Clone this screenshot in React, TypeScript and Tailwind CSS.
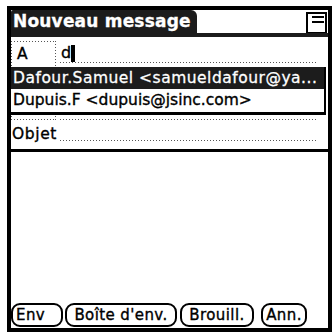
const dotsH = "h-[1px] bg-[repeating-linear-gradient(90deg,#555_0_1px,transparent_1px_3px)]";
const dotsV = "w-[1px] bg-[repeating-linear-gradient(180deg,#555_0_1px,transparent_1px_3px)]";

function LabelBox({ children, top = true, bottom = false, h }: { children?: React.ReactNode; top?: boolean; bottom?: boolean; h: string }) {
  return (
    <div className={`relative w-[45px] ${h} shrink-0`}>
      {top && <div className={`absolute left-0 right-0 top-0 ${dotsH}`} />}
      {bottom && <div className={`absolute left-0 right-0 bottom-0 ${dotsH}`} />}
      <div className={`absolute left-0 top-0 bottom-0 ${dotsV}`} />
      <div className={`absolute right-0 top-0 bottom-0 ${dotsV}`} />
      {children}
    </div>
  );
}

export default function App() {
  return (
    <div className="w-[334px] h-[334px] bg-white pl-[7px] pt-[6px] font-['DejaVu_Sans',sans-serif] text-black">
      <div className="relative w-[325px] h-[326px] border-4 border-black flex flex-col">
        {/* Title */}
        <div className="flex items-start h-[23px]">
          <div className="h-[23px] w-[186px] bg-[#1c1c1c] rounded-tr-[6px] rounded-tl-[2px] text-white font-bold text-[17px] leading-[23px] pl-[2px] tracking-[0.2px] [-webkit-text-stroke:0.3px_white]">
            Nouveau message
          </div>
          <div className="flex-1" />
          <div className="mt-[2px] mr-[1px] w-[21px] h-[22px] border-2 border-black bg-white flex flex-col items-end pt-[2px] pr-[1px] gap-[3px]">
            <span className="block h-[2px] w-[12px] bg-black" />
            <span className="block h-[2px] w-[12px] bg-black" />
          </div>
        </div>
        <div className="h-[4px] bg-[#1c1c1c]" />

        {/* A row */}
        <div className="flex h-[28px] pt-[4px] [-webkit-text-stroke:0.35px_black]">
          <LabelBox h="h-[24px]">
            <span className="absolute left-[6px] top-[3px] text-[15.5px] leading-[20px]">A</span>
          </LabelBox>
          <div className="relative ml-[4px] w-[258px]">
            <div className="absolute left-[1px] top-[1px] flex items-end">
              <span className="text-[16px] leading-[21px]">d</span>
              <span className="block w-[4px] h-[17px] bg-black mb-[1px]" />
            </div>
            <div className={`absolute left-0 right-0 top-[21px] ${dotsH}`} />
          </div>
        </div>

        {/* Cc row (hidden under list) */}
        <div className="flex h-[56px]">
          <LabelBox h="h-[55px]" top={false} bottom />
          <div className="relative ml-[4px] w-[258px]">
            <div className={`absolute left-0 right-0 top-[54px] ${dotsH}`} />
          </div>
        </div>

        {/* Objet row */}
        <div className="flex h-[25px]">
          <span className="pl-[1px] pt-[3px] text-[15.5px] leading-[20px] tracking-[0.6px] w-[49px] [-webkit-text-stroke:0.35px_black]">Objet</span>
          <div className="relative w-[258px]">
            <div className={`absolute left-0 right-0 top-[19px] ${dotsH}`} />
          </div>
        </div>
        <div className="mt-[3px] h-[3px] bg-black" />

        <div className="flex-1" />

        {/* Buttons */}
        <div className="flex items-center mb-[1px] h-[24px] text-[15px] tracking-[0.4px] [-webkit-text-stroke:0.35px_black]">
          <div className="w-[52px] h-[24px] border-2 border-black rounded-[9px] flex items-center pl-[3px] leading-[20px]">Env</div>
          <div className="ml-[2px] w-[112px] h-[24px] border-2 border-black rounded-[9px] flex items-center justify-center leading-[20px]">Boîte d'env.</div>
          <div className="ml-[3px] w-[74px] h-[24px] border-2 border-black rounded-[9px] flex items-center justify-center leading-[20px]">Brouill.</div>
          <div className="ml-[7px] w-[46px] h-[24px] border-2 border-black rounded-[9px] flex items-center justify-center leading-[20px]">Ann.</div>
        </div>

        {/* Popup list */}
        <div className="absolute left-0 top-[57px] w-[315px] border-r-2 border-b-[3px] border-black bg-white text-[15.5px]">
          <div className="h-[22px] bg-[#1c1c1c] text-white pl-[2px] leading-[22px] tracking-[0.5px] whitespace-nowrap [-webkit-text-stroke:0.3px_white]">
            Dafour.Samuel &lt;samueldafour@ya...
          </div>
          <div className="h-[23px] pl-[2px] leading-[22px] whitespace-nowrap [-webkit-text-stroke:0.35px_black]">
            Dupuis.F &lt;dupuis@jsinc.com&gt;
          </div>
        </div>
      </div>
    </div>
  );
}
